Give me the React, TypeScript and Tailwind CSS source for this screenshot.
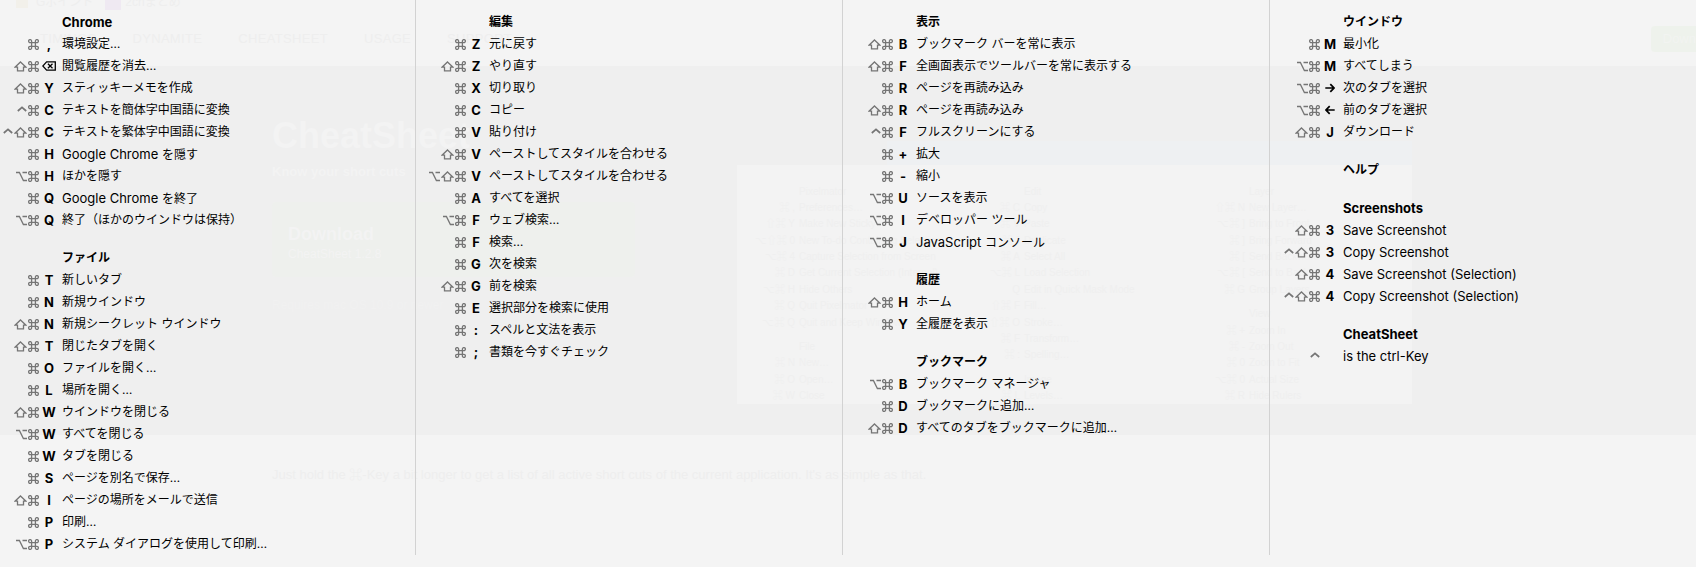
import * as React from "react";
import clsx from "clsx";

type Mod = "ctrl" | "opt" | "shift" | "cmd";

type Shortcut = {
  mods: Mod[];
  keyName: string;
  label: string;
};

type Group = {
  title: string;
  items: Shortcut[];
};

const MODS: Record<string, Mod> = {
  "^": "ctrl",
  "~": "opt",
  s: "shift",
  c: "cmd",
};

const sc = (mods: string, keyName: string, label: string): Shortcut => ({
  mods: mods.split("").map((m) => MODS[m]),
  keyName,
  label,
});

const columns: Group[][] = [
  [
    {
      title: "Chrome",
      items: [
        sc("c", ",", "環境設定…"),
        sc("sc", "delete", "閲覧履歴を消去…"),
        sc("sc", "Y", "スティッキーメモを作成"),
        sc("^c", "C", "テキストを簡体字中国語に変換"),
        sc("^sc", "C", "テキストを繁体字中国語に変換"),
        sc("c", "H", "Google Chrome を隠す"),
        sc("~c", "H", "ほかを隠す"),
        sc("c", "Q", "Google Chrome を終了"),
        sc("~c", "Q", "終了（ほかのウインドウは保持）"),
      ],
    },
    {
      title: "ファイル",
      items: [
        sc("c", "T", "新しいタブ"),
        sc("c", "N", "新規ウインドウ"),
        sc("sc", "N", "新規シークレット ウインドウ"),
        sc("sc", "T", "閉じたタブを開く"),
        sc("c", "O", "ファイルを開く…"),
        sc("c", "L", "場所を開く…"),
        sc("sc", "W", "ウインドウを閉じる"),
        sc("~c", "W", "すべてを閉じる"),
        sc("c", "W", "タブを閉じる"),
        sc("c", "S", "ページを別名で保存…"),
        sc("sc", "I", "ページの場所をメールで送信"),
        sc("c", "P", "印刷…"),
        sc("~c", "P", "システム ダイアログを使用して印刷…"),
      ],
    },
  ],
  [
    {
      title: "編集",
      items: [
        sc("c", "Z", "元に戻す"),
        sc("sc", "Z", "やり直す"),
        sc("c", "X", "切り取り"),
        sc("c", "C", "コピー"),
        sc("c", "V", "貼り付け"),
        sc("sc", "V", "ペーストしてスタイルを合わせる"),
        sc("~sc", "V", "ペーストしてスタイルを合わせる"),
        sc("c", "A", "すべてを選択"),
        sc("~c", "F", "ウェブ検索…"),
        sc("c", "F", "検索…"),
        sc("c", "G", "次を検索"),
        sc("sc", "G", "前を検索"),
        sc("c", "E", "選択部分を検索に使用"),
        sc("c", ":", "スペルと文法を表示"),
        sc("c", ";", "書類を今すぐチェック"),
      ],
    },
  ],
  [
    {
      title: "表示",
      items: [
        sc("sc", "B", "ブックマーク バーを常に表示"),
        sc("sc", "F", "全画面表示でツールバーを常に表示する"),
        sc("c", "R", "ページを再読み込み"),
        sc("sc", "R", "ページを再読み込み"),
        sc("^c", "F", "フルスクリーンにする"),
        sc("c", "+", "拡大"),
        sc("c", "-", "縮小"),
        sc("~c", "U", "ソースを表示"),
        sc("~c", "I", "デベロッパー ツール"),
        sc("~c", "J", "JavaScript コンソール"),
      ],
    },
    {
      title: "履歴",
      items: [sc("sc", "H", "ホーム"), sc("c", "Y", "全履歴を表示")],
    },
    {
      title: "ブックマーク",
      items: [
        sc("~c", "B", "ブックマーク マネージャ"),
        sc("c", "D", "ブックマークに追加…"),
        sc("sc", "D", "すべてのタブをブックマークに追加…"),
      ],
    },
  ],
  [
    {
      title: "ウインドウ",
      items: [
        sc("c", "M", "最小化"),
        sc("~c", "M", "すべてしまう"),
        sc("~c", "right", "次のタブを選択"),
        sc("~c", "left", "前のタブを選択"),
        sc("sc", "J", "ダウンロード"),
      ],
    },
    { title: "ヘルプ", items: [] },
    {
      title: "Screenshots",
      items: [
        sc("sc", "3", "Save Screenshot"),
        sc("^sc", "3", "Copy Screenshot"),
        sc("sc", "4", "Save Screenshot (Selection)"),
        sc("^sc", "4", "Copy Screenshot (Selection)"),
      ],
    },
    {
      title: "CheatSheet",
      items: [sc("^", "", "is the ctrl-Key")],
    },
  ],
];

const ModIcon = ({ mod }: { mod: Mod }) => {
  if (mod === "cmd") {
    return (
      <svg width="11" height="11" viewBox="0 0 11 11" fill="none" stroke="currentColor" strokeWidth="1.3">
        <path d="M3.6 3.6H2.2A1.5 1.5 0 1 1 3.6 2.2V8.8A1.5 1.5 0 1 1 2.2 7.4H8.8A1.5 1.5 0 1 1 7.4 8.8V2.2A1.5 1.5 0 1 1 8.8 3.6Z" />
      </svg>
    );
  }
  if (mod === "shift") {
    return (
      <svg width="13" height="11" viewBox="0 0 13 11" fill="none" stroke="currentColor" strokeWidth="1.3">
        <path d="M6.5 1 12 6.2H9.5V9.9H3.5V6.2H1Z" />
      </svg>
    );
  }
  if (mod === "opt") {
    return (
      <svg width="11" height="11" viewBox="0 0 11 11" fill="none" stroke="currentColor" strokeWidth="1.3">
        <path d="M0 1.5H3.4L7.4 9.5H11M6.5 1.5H11" />
      </svg>
    );
  }
  return (
    <svg width="10" height="11" viewBox="0 0 10 11" fill="none" stroke="currentColor" strokeWidth="1.7">
      <path d="M0.8 6 5 2.4 9.2 6" />
    </svg>
  );
};

const KeyCap = ({ name }: { name: string }) => {
  if (name === "delete") {
    return (
      <svg
        width="14"
        height="10"
        viewBox="0 0 14 10"
        fill="none"
        stroke="currentColor"
        strokeWidth="1.3"
        className="shrink-0"
      >
        <path d="M4.6 0.9H13.3V9.1H4.6L0.8 5ZM5.9 2.8 10.5 7.2M10.5 2.8 5.9 7.2" />
      </svg>
    );
  }
  if (name === "right" || name === "left") {
    return (
      <svg
        width="10"
        height="10"
        viewBox="0 0 10 10"
        fill="none"
        stroke="currentColor"
        strokeWidth="1.7"
        className={clsx(name === "left" && "rotate-180")}
      >
        <path d="M0.3 5H9M5.3 1.2 9 5 5.3 8.8" />
      </svg>
    );
  }
  return <>{name}</>;
};

// latin runs are set one size larger than the kana and kanji
const Label = ({ text }: { text: string }) => (
  <>
    {text.split(/([A-Za-z][A-Za-z() -]+)/).map((part, i) =>
      i % 2 === 1 ? (
        <span key={i} className="text-[13px]">
          {part}
        </span>
      ) : (
        part
      )
    )}
  </>
);

const ShortcutRow = ({ item }: { item: Shortcut }) => (
  <li className="flex h-[22px] items-center leading-[22px]">
    <span className="flex w-[39px] shrink-0 items-center justify-end gap-px text-[#757575]">
      {item.mods.map((mod) => (
        <ModIcon key={mod} mod={mod} />
      ))}
    </span>
    <kbd className="flex w-[23px] shrink-0 justify-center pr-[3px] font-['Inter',sans-serif] text-[13px] font-bold">
      <KeyCap name={item.keyName} />
    </kbd>
    <span className="whitespace-nowrap">
      <Label text={item.label} />
    </span>
  </li>
);

const nav = ["TIMINGS", "DYNAMITE", "CHEATSHEET", "USAGE", "SUPPORT"];

const previewColumns = [
  [
    ["", "Pixelmator"],
    ["⌘ ,", "Preferences…"],
    ["⇧⌘ Y", "Make New Sticky"],
    ["⌥⇧⌘ 0", "New To-do Containing Selection"],
    ["⌥⌘ 4", "Capture Selection from Screen"],
    ["⌘ D", "Get Current Selection (Internal)"],
    ["⌥⌘ H", "Hide Others"],
    ["⌘ Q", "Quit Pixelmator"],
    ["⌥⌘ Q", "Quit and Keep Windows"],
    null,
    ["", "File"],
    ["⌘ N", "New…"],
    ["⌘ O", "Open…"],
    ["⌘ W", "Close"],
  ],
  [
    ["", "Edit"],
    ["⌘ C", "Copy"],
    ["⌘ V", "Paste"],
    ["⌘ J", "Duplicate"],
    ["⌘ A", "Select All"],
    ["⌥⌘ L", "Load Selection"],
    ["Q", "Edit in Quick Mask Mode"],
    ["⇧⌘ F", "Fill…"],
    ["⇧⌘ O", "Stroke…"],
    ["⌘ F", "Transform…"],
    ["⌘ :", "Spelling…"],
    null,
    ["", "Image"],
    ["⌘ L", "Levels…"],
  ],
  [
    ["", "Layer"],
    ["⇧⌘ N", "New Layer…"],
    ["⌥⌘ ]", "Bring to Front"],
    ["⌘ ]", "Bring Forward"],
    ["⌘ [", "Send Backward"],
    ["⌥⌘ [", "Send to Back"],
    ["⌘ G", "Group Layers"],
    null,
    ["", "View"],
    ["⌘ +", "Zoom In"],
    ["⌘ -", "Zoom Out"],
    ["⌘ 0", "Zoom to Fit"],
    ["⌥⌘ 0", "Actual Size"],
    ["⌘ R", "Hide Rulers"],
  ],
];

// the web page that shines through the translucent sheet
const Backdrop = () => (
  <div
    aria-hidden="true"
    className="absolute inset-0 flex flex-col overflow-hidden font-['Liberation_Sans','Noto_Sans_CJK_JP',sans-serif] text-[#eeeeee] select-none"
  >
    <div className="flex h-3 shrink-0 items-end gap-3 overflow-hidden pl-4 text-xs leading-5">
      <span className="flex items-center gap-2">
        <span className="h-3 w-3 bg-[#f2f0ea]" />
        Gポイント
      </span>
      <span className="flex items-center gap-1">
        <span className="h-4 w-4 bg-[#efe9f2]" />
        2chまとめ
      </span>
    </div>
    <div className="flex h-[54px] shrink-0 items-center justify-between">
      <div className="flex gap-9 pl-10 text-[13px] tracking-wide">
        {nav.map((n) => (
          <span key={n}>{n}</span>
        ))}
      </div>
      <span className="rounded-l bg-[#eef2ec] py-1 pl-3 text-[13px] text-[#f2f4f1]">Down</span>
    </div>
    <div className="flex h-[369px] shrink-0 bg-[#efefef] pl-[272px] text-[#f3f3f3]">
      <div className="w-[465px] shrink-0 pt-12">
        <p className="text-[36px] leading-[44px] font-bold">CheatSheet</p>
        <p className="pt-1 text-[13px] leading-5 font-bold">Know your short cuts</p>
        <div className="mt-5 mr-[102px] h-[75px] rounded bg-[#eef0ed] px-4 pt-5">
          <p className="text-[18px] leading-6 font-bold">Download</p>
          <p className="text-[12px] leading-4">CheatSheet 1.2.8</p>
        </div>
        <p className="pt-4 text-[12px] leading-6 text-[#f1f1f1]">Requires mac OS 10.9 or newer</p>
      </div>
      <div className="flex w-[675px] flex-col pt-[75px]">
        <div className="ml-[150px] h-6 bg-[#eef0f2]" />
        <div className="grid h-[239px] grid-cols-3 bg-[#f3f3f3] pt-[18px] text-[10px] text-[#efefef]">
          {previewColumns.map((rows, i) => (
            <div key={i} className="flex flex-col">
              {rows.map((row, j) =>
                row ? (
                  <div key={j} className="flex min-h-0 flex-1 items-center gap-1 whitespace-nowrap">
                    <span className="w-[58px] shrink-0 text-right">{row[0]}</span>
                    <span>{row[1]}</span>
                  </div>
                ) : (
                  <div key={j} className="h-2" />
                )
              )}
            </div>
          ))}
        </div>
      </div>
    </div>
    <p className="pt-7 pl-[272px] text-[13px] leading-6">
      Just hold the ⌘-Key a bit longer to get a list of all active short cuts of the current application. It's as simple as that.
    </p>
  </div>
);

const App = () => {
  return (
    <main className="relative min-h-screen bg-[#f4f4f4] font-['Inter','Noto_Sans_CJK_JP',sans-serif] text-xs text-black">
      <Backdrop />
      <div className="relative grid min-h-screen grid-cols-[416fr_427fr_427fr_426fr] pb-3">
        {columns.map((groups, i) => (
          <div
            key={i}
            className={clsx(
              "flex min-w-0 flex-col gap-4 pt-[11px]",
              i > 0 && "pl-[11px]",
              i < columns.length - 1 && "border-r border-[#d2d2d2]"
            )}
          >
            {groups.map((group) => (
              <section key={group.title}>
                <h2 className="h-[22px] pl-[62px] leading-[22px] font-bold">
                  <Label text={group.title} />
                </h2>
                <ul>
                  {group.items.map((item, j) => (
                    <ShortcutRow key={j} item={item} />
                  ))}
                </ul>
              </section>
            ))}
          </div>
        ))}
      </div>
    </main>
  );
};

export default App;
